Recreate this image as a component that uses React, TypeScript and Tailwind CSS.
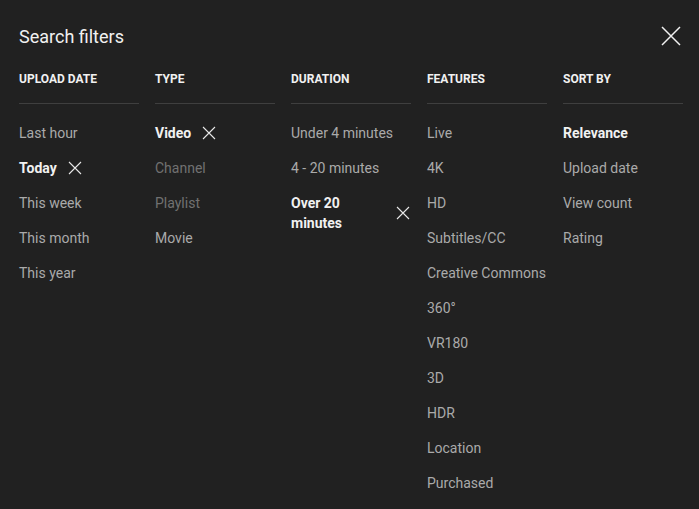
import React from "react";

type Item = { label: string; state?: "selected" | "disabled" };
type Col = { title: string; items: Item[] };

const cols: Col[] = [
  {
    title: "UPLOAD DATE",
    items: [
      { label: "Last hour" },
      { label: "Today", state: "selected" },
      { label: "This week" },
      { label: "This month" },
      { label: "This year" },
    ],
  },
  {
    title: "TYPE",
    items: [
      { label: "Video", state: "selected" },
      { label: "Channel", state: "disabled" },
      { label: "Playlist", state: "disabled" },
      { label: "Movie" },
    ],
  },
  {
    title: "DURATION",
    items: [
      { label: "Under 4 minutes" },
      { label: "4 - 20 minutes" },
      { label: "Over 20 minutes", state: "selected" },
    ],
  },
  {
    title: "FEATURES",
    items: [
      { label: "Live" },
      { label: "4K" },
      { label: "HD" },
      { label: "Subtitles/CC" },
      { label: "Creative Commons" },
      { label: "360°" },
      { label: "VR180" },
      { label: "3D" },
      { label: "HDR" },
      { label: "Location" },
      { label: "Purchased" },
    ],
  },
  {
    title: "SORT BY",
    items: [
      { label: "Relevance", state: "selected" },
      { label: "Upload date" },
      { label: "View count" },
      { label: "Rating" },
    ],
  },
];

function SmallX() {
  return (
    <svg width="16" height="16" viewBox="0 0 16 16" className="shrink-0 ml-[10px]">
      <path d="M2 2 L14 14 M14 2 L2 14" stroke="#e8e8e8" strokeWidth="1.1" fill="none" />
    </svg>
  );
}

export default function App() {
  return (
    <div
      className="w-[699px] h-[509px] bg-[#212121] overflow-hidden pl-[19px] pr-[16px] pt-[16px]"
      style={{ fontFamily: "Roboto, 'Noto Sans', sans-serif" }}
    >
      <div className="flex items-center justify-between h-[40px]">
        <div className="text-[18px] text-[#f1f1f1] leading-[24px] pt-[2px]">Search filters</div>
        <svg width="24" height="24" viewBox="0 0 24 24">
          <path d="M3 3 L21 21 M21 3 L3 21" stroke="#f1f1f1" strokeWidth="1.5" fill="none" />
        </svg>
      </div>
      <div className="flex gap-[16px] mt-[15px]">
        {cols.map((c) => (
          <div key={c.title} className="w-[120px] shrink-0">
            <div className="text-[12px] leading-[16px] font-bold text-[#f1f1f1] pb-[16px] border-b border-[#3f3f3f]">
              {c.title}
            </div>
            <div className="flex flex-col gap-[15px] mt-[19px]">
              {c.items.map((it) => (
                <div key={it.label} className="flex items-center">
                  <span
                    className={
                      "text-[14px] leading-[20px] " +
                      (it.state === "selected"
                        ? "font-bold text-[#f1f1f1]"
                        : it.state === "disabled"
                        ? "text-[#717171]"
                        : "text-[#aaaaaa]")
                    }
                  >
                    {it.label}
                  </span>
                  {it.state === "selected" && c.title !== "SORT BY" && <SmallX />}
                </div>
              ))}
            </div>
          </div>
        ))}
      </div>
    </div>
  );
}
